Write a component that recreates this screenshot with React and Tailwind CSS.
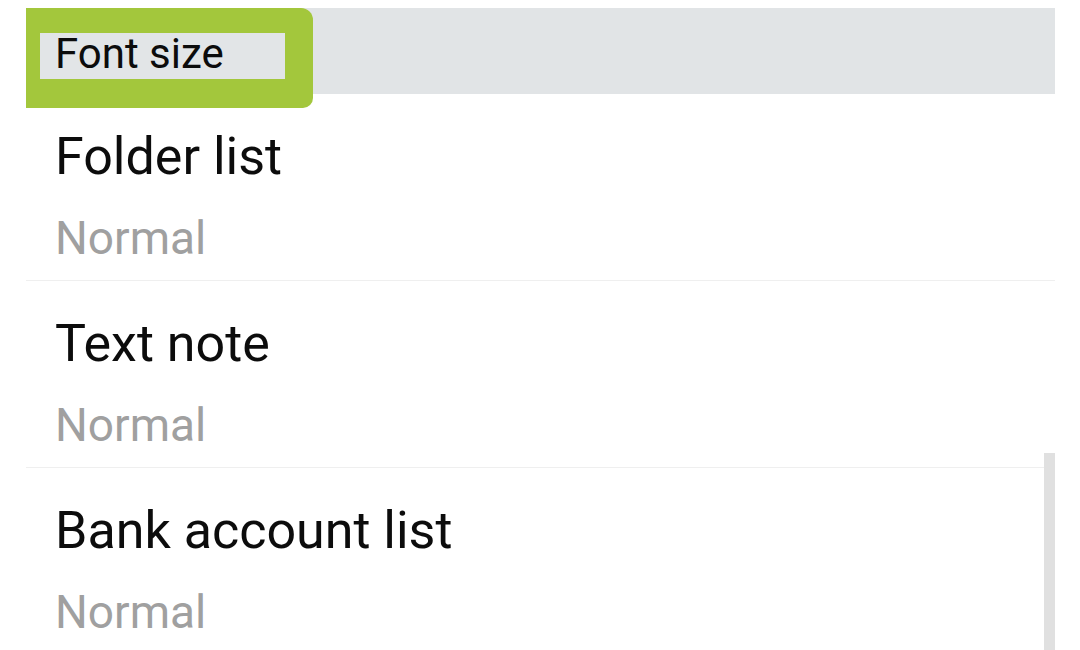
import React from "react";

const rows = [
  { title: "Folder list", value: "Normal" },
  { title: "Text note", value: "Normal" },
  { title: "Bank account list", value: "Normal" },
];

const Row = ({ title, value }) => (
  <div className="h-[187px] border-b border-[#efefef] pt-[33px] pl-[29px]">
    <div className="text-[52px] leading-[60px] text-[#0c0c0c]">{title}</div>
    <div className="mt-[23px] text-[46px] leading-[56px] text-[#a0a0a0]">{value}</div>
  </div>
);

export default function App() {
  return (
    <div
      className="w-[1080px] h-[650px] overflow-hidden bg-white px-[26px] pt-[8px]"
      style={{ fontFamily: "Roboto, 'Noto Sans', sans-serif" }}
    >
      <div className="relative w-[1029px]">
        <div className="h-[86px] bg-[#e1e4e6]" />
        <div className="absolute left-0 top-0 w-[287px] h-[100px] bg-[#a3c73c] rounded-tr-[12px] rounded-br-[10px] pl-[14px] pt-[25px]">
          <div className="w-[245px] h-[46px] bg-[#e2e5e7] pl-[15px] pt-[3px] text-[42px] leading-[36px] text-[#0c0c0c]">
            Font size
          </div>
        </div>
        <div className="relative">
          {rows.map((r, i) => (
            <Row key={i} {...r} />
          ))}
          <div className="absolute right-0 top-[359px] w-[11px] h-[300px] bg-[#e0e0e0]" />
        </div>
      </div>
    </div>
  );
}
